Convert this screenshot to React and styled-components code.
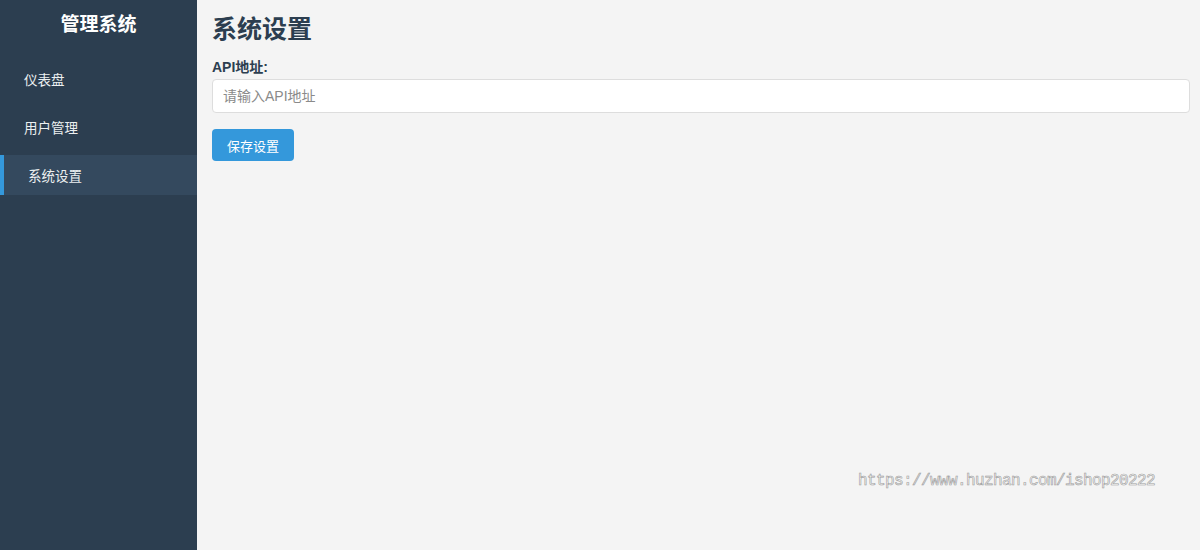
import React from "react";
import styled, { createGlobalStyle } from "styled-components";

const GlobalStyle = createGlobalStyle`
  html, body { margin: 0; padding: 0; height: 100%; }
  body {
    font-family: "Liberation Sans", "Noto Sans CJK SC", sans-serif;
    background: #f4f4f4;
  }
  #root { height: 100%; }
  * { box-sizing: border-box; }
`;

const Layout = styled.div`
  display: flex;
  height: 100vh;
  position: relative;
`;

const Sidebar = styled.aside`
  width: 197px;
  flex: none;
  background: #2c3e50;
  color: #ecf0f1;
  display: flex;
  flex-direction: column;
`;

const Brand = styled.h2`
  margin: 0;
  padding: 15px 0 0;
  height: 59px;
  font-size: 19px;
  line-height: 20px;
  font-weight: 700;
  text-align: center;
  color: #ffffff;
`;

const Nav = styled.nav`
  display: flex;
  flex-direction: column;
  gap: 8px;
`;

const NavItem = styled.div`
  height: 40px;
  display: flex;
  align-items: center;
  padding-left: 24px;
  font-size: 13.5px;
  color: #ecf0f1;
  background: ${(p) => (p.$active ? "#34495e" : "transparent")};
  border-left: ${(p) => (p.$active ? "4px solid #3498db" : "0")};
  cursor: pointer;
`;

const Main = styled.main`
  flex: 1;
  padding: 14px 10px 0 15px;
  display: flex;
  flex-direction: column;
  align-items: flex-start;
`;

const Title = styled.h1`
  margin: 0;
  font-size: 25px;
  line-height: 30px;
  font-weight: 700;
  color: #2c3e50;
`;

const Field = styled.div`
  margin-top: 14px;
  width: 100%;
  display: flex;
  flex-direction: column;
`;

const Label = styled.label`
  font-size: 14px;
  line-height: 18px;
  font-weight: 700;
  color: #2c3e50;
  margin-bottom: 3px;
`;

const Input = styled.input`
  width: 100%;
  height: 34px;
  padding: 0 10px;
  font-size: 14px;
  font-family: inherit;
  border: 1px solid #dddddd;
  border-radius: 4px;
  background: #ffffff;
  color: #333;
  outline: none;
  &::placeholder { color: #8a8a8a; }
`;

const Button = styled.button`
  margin-top: 16px;
  height: 32px;
  padding: 0 15px;
  font-size: 13px;
  font-family: inherit;
  color: #ffffff;
  background: #3498db;
  border: none;
  border-radius: 4px;
  cursor: pointer;
`;

const Watermark = styled.div`
  position: absolute;
  left: 858px;
  top: 471px;
  font-family: "Liberation Mono", "DejaVu Sans Mono", monospace;
  font-size: 16px;
  letter-spacing: -0.6px;
  line-height: 20px;
  color: #fbfbfb;
  -webkit-text-stroke: 0.6px #9a9a9a;
  pointer-events: none;
  white-space: nowrap;
`;

export default function App() {
  return (
    <>
      <GlobalStyle />
      <Layout>
        <Sidebar>
          <Brand>管理系统</Brand>
          <Nav>
            <NavItem>仪表盘</NavItem>
            <NavItem>用户管理</NavItem>
            <NavItem $active>系统设置</NavItem>
          </Nav>
        </Sidebar>
        <Main>
          <Title>系统设置</Title>
          <Field>
            <Label htmlFor="api">API地址:</Label>
            <Input id="api" placeholder="请输入API地址" />
          </Field>
          <Button>保存设置</Button>
        </Main>
        <Watermark>https://www.huzhan.com/ishop20222</Watermark>
      </Layout>
    </>
  );
}
